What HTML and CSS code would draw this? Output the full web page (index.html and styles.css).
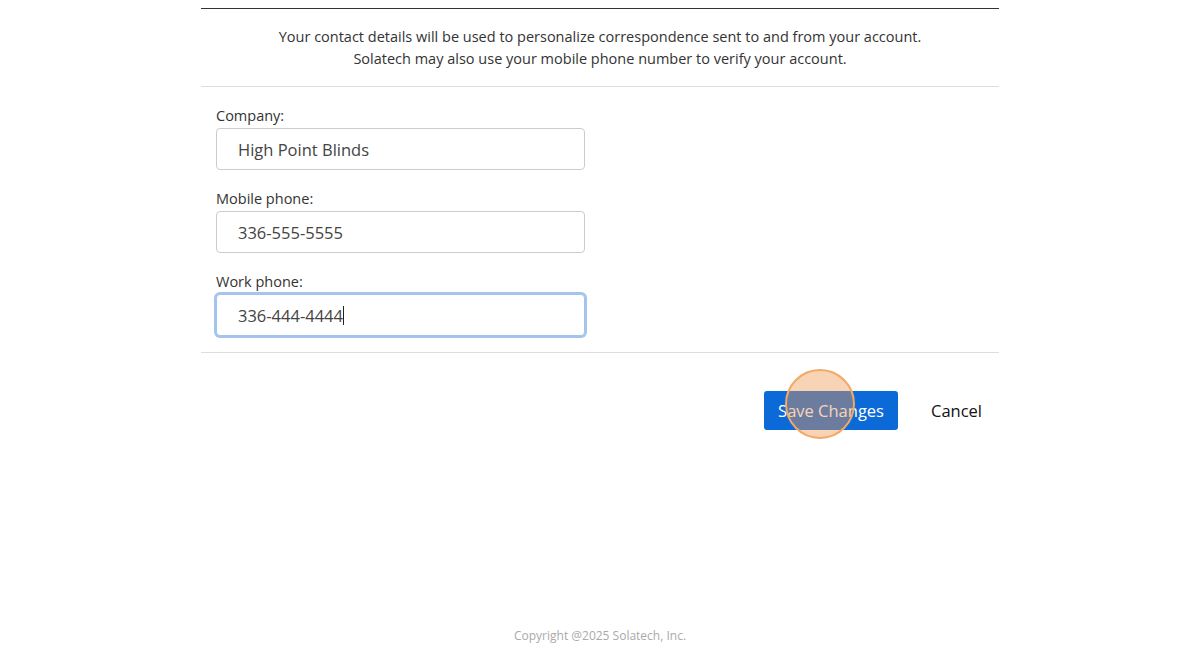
FILE: index.html
```html
<!DOCTYPE html>
<html lang="en">
<head>
    <meta charset="UTF-8">
    <meta name="viewport" content="width=device-width, initial-scale=1.0">
    <title>Contact Details</title>
    <link rel="stylesheet" href="styles.css">
</head>
<body>

<div class="page">

    <div class="panel">
        <p class="intro">
            Your contact details will be used to personalize correspondence sent to and from your account.<br>
            Solatech may also use your mobile phone number to verify your account.
        </p>

        <form id="contactForm" class="fields">
            <label for="company">Company:</label>
            <input type="text" id="company" name="company" value="High Point Blinds">

            <label for="mobilePhone">Mobile phone:</label>
            <input type="tel" id="mobilePhone" name="mobilePhone" value="336-555-5555">

            <label for="workPhone">Work phone:</label>
            <div class="field-wrap">
                <input type="tel" id="workPhone" name="workPhone" class="focused" value="336-444-4444">
                <span class="caret"></span>
            </div>
        </form>

        <div class="actions">
            <div class="save-wrap">
                <button type="submit" form="contactForm" class="btn-save">Save Changes</button>
                <span class="click-dot"></span>
            </div>
            <button type="button" class="btn-cancel">Cancel</button>
        </div>
    </div>

    <footer class="footer">Copyright @2025 Solatech, Inc.</footer>
</div>

<script>
    document.getElementById("contactForm").addEventListener("submit", function(event) {
        event.preventDefault();
    });
</script>

</body>
</html>
```

FILE: styles.css
```css
* {
    box-sizing: border-box;
}

body {
    margin: 0;
    font-family: "Open Sans", "Noto Sans", sans-serif;
    color: #333;
    background: #fff;
}

.page {
    min-height: 671px;
    display: flex;
    flex-direction: column;
}

.panel {
    width: 798px;
    margin: 8px auto 0;
    border-top: 1px solid #333;
}

.intro {
    margin: 0;
    padding: 17px 0 16px;
    text-align: center;
    font-size: 14.5px;
    line-height: 22px;
    border-bottom: 1px solid #ddd;
}

.fields {
    display: flex;
    flex-direction: column;
    align-items: flex-start;
    padding: 18px 15px 16px;
    border-bottom: 1px solid #ddd;
}

.fields label {
    font-size: 14.5px;
    line-height: 22px;
    margin-bottom: 1px;
}

.fields input {
    width: 369px;
    height: 42px;
    margin-bottom: 18px;
    padding: 0 21px;
    font-family: inherit;
    font-size: 16.5px;
    color: #444;
    border: 1px solid #ccc;
    border-radius: 4px;
    outline: none;
}

.field-wrap {
    position: relative;
}

.fields .field-wrap input {
    margin-bottom: 0;
}

.fields input.focused {
    border-color: #a4c4ee;
    box-shadow: 0 0 0 2px #a4c4ee;
}

.caret {
    position: absolute;
    left: 127px;
    top: 12px;
    width: 1px;
    height: 19px;
    background: #222;
}

.actions {
    display: flex;
    justify-content: flex-end;
    align-items: center;
    gap: 16px;
    padding: 38px 0 0;
}

.save-wrap {
    position: relative;
}

.btn-save {
    display: block;
    height: 39px;
    padding: 0 14px;
    font-family: inherit;
    font-size: 16.5px;
    color: #fff;
    background: #0b6ad8;
    border: none;
    border-radius: 3px;
    cursor: pointer;
}

.click-dot {
    position: absolute;
    left: 21px;
    top: -22px;
    width: 70px;
    height: 70px;
    border-radius: 50%;
    border: 2px solid #f2a866;
    background: rgba(240, 150, 80, 0.42);
    pointer-events: none;
}

.btn-cancel {
    padding: 0 17px;
    height: 39px;
    font-family: inherit;
    font-size: 16.5px;
    color: #111;
    background: none;
    border: none;
    cursor: pointer;
}

.footer {
    margin-top: auto;
    padding-bottom: 26px;
    text-align: center;
    font-size: 12px;
    line-height: 18px;
    color: #aaa;
}
```
